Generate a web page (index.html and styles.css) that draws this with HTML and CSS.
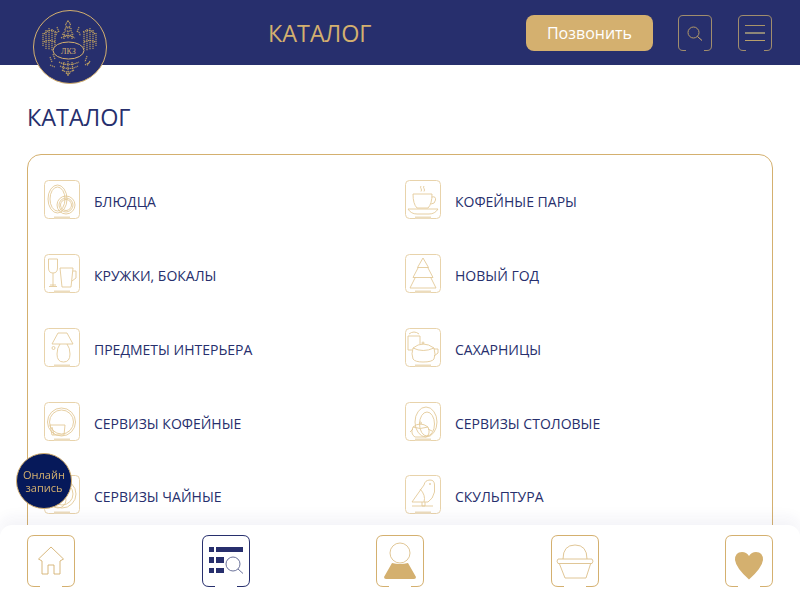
FILE: index.html
```html
<!DOCTYPE html>
<html lang="ru">
<head>
<meta charset="utf-8">
<title>Каталог</title>
<link rel="stylesheet" href="styles.css">
</head>
<body>
<svg class="defs" width="0" height="0" aria-hidden="true">
  <defs>
    <symbol id="frame" viewBox="0 0 36 39">
      <path class="ln" d="M10 38.500H4.500Q.5 38.500.5 34.500V4.500Q.5.500 4.500.500H31.500Q35.500.500 35.500 4.500V34.500Q35.500 38.500 31.500 38.500H26"/>
      <rect class="bar" x="10" y="36.500" width="16" height="3"/>
    </symbol>
  </defs>
</svg>
<header class="topbar">
  <div class="logo">
    <svg viewBox="0 0 74 74" width="74" height="74">
      <circle cx="37" cy="37" r="36.500" fill="#272f6d" stroke="#d4b06f" stroke-width="1"/>
      <g class="crest">
        <path d="M35 11l-2.500 3 1 3h3l1-3zM32 18h6v3h-6z"/>
        <path d="M26 21q-3 1-3 5M44 21q3 1 3 5M24 17l2 5M46 17l-2 5M29 24q6 3 12 0M28 28q7-4 14 0M31 22v7M35 21v8M39 22v7"/>
        <path d="M10 23v13M13 20v19M16 18v22M19 19v22M22 22v17M51 22v17M54 19v22M57 18v22M60 20v19M63 23v13"/>
        <path d="M11 24q5-6 12-2M62 24q-5-6-12-2M11 32q5-3 11 0M62 32q-5-3-11 0"/>
        <path d="M17 47l2 5M20 44l2 5M17 55l5 2M52 55l5-3M54 46l-2 6M57 51l-3 5"/>
        <path d="M26 52q9 5 20 0M27 56q9 5 18 0M29 60q6 4 12 0M35 51v15M31 52l-1 10M39 52l1 10M33 63l2 2M37 63l-2 2"/>
      </g>
      <ellipse cx="35.500" cy="40.500" rx="15.500" ry="8.500" fill="#272f6d" stroke="#d4b06f" stroke-width="1"/>
      <text x="35.500" y="43.500" class="mono">ЛКЗ</text>
    </svg>
  </div>
  <h2 class="page-name">КАТАЛОГ</h2>
  <a class="call" href="#">Позвонить</a>
  <button class="square search" aria-label="Поиск">
    <svg viewBox="0 0 34 36" width="34" height="36">
      <path class="hd" d="M8 35.500H5Q.5 35.500.5 31V5Q.5.500 5 .500H29Q33.500.500 33.500 5V31Q33.500 35.500 29 35.500H26"/>
      <circle cx="15.500" cy="17.500" r="5.500" fill="none" stroke="#b49a68"/>
      <path d="M19.500 21.500l4.500 4" stroke="#d4b06f" fill="none"/>
    </svg>
  </button>
  <button class="square menu" aria-label="Меню">
    <svg viewBox="0 0 34 36" width="34" height="36">
      <path class="hd" d="M8 35.500H5Q.5 35.500.5 31V5Q.5.500 5 .500H29Q33.500.500 33.500 5V31Q33.500 35.500 29 35.500H26"/>
      <path d="M7 10.500H27" stroke="#a99468" fill="none"/>
      <path d="M7 18H27" stroke="#8d8678" stroke-width="2" fill="none"/>
      <path d="M7 25.500H27" stroke="#b89f6c" fill="none"/>
    </svg>
  </button>
</header>

<main class="content">
  <h1 class="heading">КАТАЛОГ</h1>
  <section class="catalog">
    <a class="item" href="#">
      <svg class="ico" viewBox="0 0 36 39"><use href="#frame"/>
        <g class="art"><ellipse cx="13.500" cy="19" rx="9.500" ry="14"/><ellipse cx="13.500" cy="19" rx="7.500" ry="12"/><circle cx="22" cy="25" r="9"/><circle cx="22" cy="25" r="7"/><circle cx="22" cy="25" r="5.500"/></g></svg>
      <span>БЛЮДЦА</span></a>
    <a class="item" href="#">
      <svg class="ico" viewBox="0 0 36 39"><use href="#frame"/>
        <g class="art"><path d="M16 6q-1 1 0 2.500t0 3M19 6q-1 1 0 2.500t0 3"/><path d="M8 14H27Q27 24 23 28H12Q8 24 8 14zM27 17q4-1 3.500 3t-4.500 4"/><path d="M3 29H33Q30 34 24 34H12Q6 34 3 29z"/></g></svg>
      <span>КОФЕЙНЫЕ ПАРЫ</span></a>
    <a class="item" href="#">
      <svg class="ico" viewBox="0 0 36 39"><use href="#frame"/>
        <g class="art"><path d="M4.500 5H13.500V14Q13.500 19 9 19T4.500 14zM9 19V32M5 32.500H13M6 31H12"/><path d="M16 14H29L27 33H18zM29 17H32V24L28 27"/></g></svg>
      <span>КРУЖКИ, БОКАЛЫ</span></a>
    <a class="item" href="#">
      <svg class="ico" viewBox="0 0 36 39"><use href="#frame"/>
        <g class="art"><path d="M18 4L12.500 13.500H23.500zM13.500 13L8 23.500H28L22.500 13M10.500 23L5 34H31L25.500 23"/></g></svg>
      <span>НОВЫЙ ГОД</span></a>
    <a class="item" href="#">
      <svg class="ico" viewBox="0 0 36 39"><use href="#frame"/>
        <g class="art"><path d="M14 5H23L29 16H8zM16 16Q13 20 13 26Q13 34 19.500 34T26 26Q26 20 23 16"/><circle cx="9.500" cy="20" r="1.500"/></g></svg>
      <span>ПРЕДМЕТЫ ИНТЕРЬЕРА</span></a>
    <a class="item" href="#">
      <svg class="ico" viewBox="0 0 36 39"><use href="#frame"/>
        <g class="art"><path d="M3 8H15V16M3 8V22H7M4 6Q9 2 14 6"/><path d="M8 20Q18 12 29 20Q31 27 29 31Q27 34 18 34Q10 34 8 31Q6 26 8 20zM8 20Q18 25 29 20M29 21H33V25L29 28"/><circle cx="18" cy="15" r="1"/></g></svg>
      <span>САХАРНИЦЫ</span></a>
    <a class="item" href="#">
      <svg class="ico" viewBox="0 0 36 39"><use href="#frame"/>
        <g class="art"><circle cx="17.500" cy="20" r="14"/><circle cx="17.500" cy="20" r="12"/><path d="M6 23H21L20 33H8zM8 25L10 33"/></g></svg>
      <span>СЕРВИЗЫ КОФЕЙНЫЕ</span></a>
    <a class="item" href="#">
      <svg class="ico" viewBox="0 0 36 39"><use href="#frame"/>
        <g class="art"><ellipse cx="21" cy="20" rx="11" ry="15"/><ellipse cx="22" cy="22" rx="7.500" ry="12"/><path d="M8 25Q15 19 23 25Q26 32 21 35H10Q5 32 8 25zM8 25Q15 28 23 25M8 27L5 30M23 27L27 29"/><circle cx="15.500" cy="21" r="1"/></g></svg>
      <span>СЕРВИЗЫ СТОЛОВЫЕ</span></a>
    <a class="item" href="#">
      <svg class="ico" viewBox="0 0 36 39"><use href="#frame"/>
        <g class="art"><circle cx="18" cy="19" r="14"/><circle cx="18" cy="19" r="11"/><circle cx="14" cy="25" r="8"/></g></svg>
      <span>СЕРВИЗЫ ЧАЙНЫЕ</span></a>
    <a class="item" href="#">
      <svg class="ico" viewBox="0 0 36 39"><use href="#frame"/>
        <g class="art"><path d="M7 27L19 10Q20 5 25 5Q29.500 5 29.500 10V17Q28 24 23 27H7M15 14Q21 20 19 27M17 27V31H20V27M7 31H28"/><circle cx="25" cy="9" r=".6"/></g></svg>
      <span>СКУЛЬПТУРА</span></a>
  </section>
</main>

<a class="online" href="#">Онлайн<br>запись</a>

<nav class="bottom">
  <a class="tab" href="#" aria-label="Главная">
    <svg viewBox="0 0 48 52" width="48" height="52">
      <path class="tf" d="M13 51.500H7Q.5 51.500.5 45V7Q.5.500 7 .500H41Q47.500.500 47.500 7V45Q47.500 51.500 41 51.500H35"/>
      <path class="tl" d="M24 12L36.500 24L33 26V39H27V30H21V39H15V26L11.500 24Z"/>
    </svg>
  </a>
  <a class="tab" href="#" aria-label="Каталог">
    <svg viewBox="0 0 48 52" width="48" height="52">
      <path class="tf navy" d="M13 51.500H7Q.5 51.500.5 45V7Q.5.500 7 .500H41Q47.500.500 47.500 7V45Q47.500 51.500 41 51.500H35"/>
      <path class="fill-navy" d="M7 12H12V17H7zM14 12H41V17H14zM7 22H12V28H7zM14 22H22V28H14zM7 33H12V38H7zM14 33H22V38H14z"/>
      <circle class="tl navy" cx="31" cy="29" r="7"/>
      <path class="tl navy" d="M36 34L41 38.500"/>
    </svg>
  </a>
  <a class="tab" href="#" aria-label="Профиль">
    <svg viewBox="0 0 48 52" width="48" height="52">
      <path class="tf" d="M13 51.500H7Q.5 51.500.5 45V7Q.5.500 7 .500H41Q47.500.500 47.500 7V45Q47.500 51.500 41 51.500H35"/>
      <circle class="tl thin" cx="24" cy="18" r="10"/>
      <path class="fill-gold" d="M16 28Q24 30 32 28L40 42Q40 44 38 44H10Q8 44 8 42z"/>
    </svg>
  </a>
  <a class="tab" href="#" aria-label="Корзина">
    <svg viewBox="0 0 48 52" width="48" height="52">
      <path class="tf" d="M13 51.500H7Q.5 51.500.5 45V7Q.5.500 7 .500H41Q47.500.500 47.500 7V45Q47.500 51.500 41 51.500H35"/>
      <path class="tl thin" d="M12 24Q12 10 24 10T36 24M7 24H41Q43 26 41 28.500H7Q5 26 7 24zM8.500 29L14 43H35L39.500 29"/>
    </svg>
  </a>
  <a class="tab" href="#" aria-label="Избранное">
    <svg viewBox="0 0 48 52" width="48" height="52">
      <path class="tf" d="M13 51.500H7Q.5 51.500.5 45V7Q.5.500 7 .500H41Q47.500.500 47.500 7V45Q47.500 51.500 41 51.500H35"/>
      <path class="fill-gold" d="M24 44.500Q11 33 10 25Q10 17 17 17Q21.500 17 24 21Q26.500 17 31 17Q38 17 38 25Q37 33 24 44.500z"/>
    </svg>
  </a>
</nav>
</body>
</html>
```
FILE: styles.css
```css
* { box-sizing: border-box; }
html, body { height: 100%; }
body {
  margin: 0;
  height: 600px;
  overflow: hidden;
  background: #fff;
  font-family: "Open Sans", "Noto Sans", sans-serif;
  color: #272f6d;
}
.defs { position: absolute; }
a { text-decoration: none; color: inherit; }

.topbar {
  height: 65px;
  background: #272f6d;
  display: flex;
  align-items: flex-start;
  padding: 0 28px 0 33px;
}
.logo { width: 74px; height: 74px; margin-top: 10px; flex: none; position: relative; z-index: 2; }
.logo svg { display: block; }
.crest { fill: none; stroke: #b99c62; stroke-width: 1.200; stroke-dasharray: 1.300 .7; }
.mono { fill: #d4b06f; font-size: 8px; font-family: "Liberation Serif", serif; text-anchor: middle; }
.page-name {
  margin: 14px 0 0 161px;
  width: 258px;
  font-size: 23.400px;
  line-height: 38px;
  font-weight: 400;
  color: #d4b06f;
}
.call {
  margin: 15px 25px 0 0;
  width: 127px;
  height: 36px;
  flex: none;
  background: #d4b06f;
  border-radius: 8px;
  color: #fff;
  font-size: 16px;
  line-height: 36px;
  text-align: center;
}
.square {
  width: 34px; height: 36px; padding: 0; margin-top: 15px;
  border: 0; background: none; flex: none;
}
.square svg { display: block; }
.search { margin-right: 26px; }
.hd { fill: none; stroke: #a08d6d; stroke-width: 1; }

.content { padding: 0 27px; }
.heading {
  margin: 33px 0 18px;
  font-size: 23.400px;
  line-height: 38px;
  font-weight: 400;
  color: #272f6d;
}
.catalog {
  border: 1px solid #d4b06f;
  border-radius: 14px;
  padding: 8px 16px 0;
  display: grid;
  grid-template-columns: 361px 1fr;
  grid-auto-rows: 73.750px;
  height: 430px;
}
.item { display: flex; align-items: center; gap: 14px; font-size: 14px; color: #272f6d; }
.item span { padding-top: 4px; }
.ico { width: 36px; height: 39px; flex: none; overflow: visible; }
.ln { fill: none; stroke: #e8d3ab; stroke-width: 1; }
.bar { fill: #ecdcbd; }
.art { fill: none; stroke: #e3c999; stroke-width: .9; }

.online {
  position: absolute;
  left: 16px; top: 453px;
  width: 56px; height: 56px;
  border-radius: 50%;
  background: #06195a;
  border: 1px solid #d4b06f;
  color: #d4b06f;
  font-size: 11px;
  line-height: 13px;
  display: flex; align-items: center; justify-content: center;
  text-align: center;
  z-index: 3;
}

.bottom {
  position: fixed;
  left: 0; right: 0; bottom: 0;
  height: 75px;
  background: #fff;
  border-radius: 12px 12px 0 0;
  box-shadow: 0 -8px 14px rgba(39, 47, 109, .05);
  padding: 10px 27px 0;
  display: flex;
  justify-content: space-between;
  align-items: flex-start;
  z-index: 2;
}
.tab { display: block; width: 48px; height: 52px; }
.tab svg { display: block; }
.tf { fill: none; stroke: #d4b06f; stroke-width: 1; }
.tf.navy { stroke: #272f6d; }
.tl { fill: none; stroke: #d4b06f; stroke-width: .9; }
.tl.thin { stroke: #dcbf8a; }
.tl.navy { stroke: #5a628f; }
.fill-gold { fill: #d4b06f; }
.fill-navy { fill: #272f6d; }
```
